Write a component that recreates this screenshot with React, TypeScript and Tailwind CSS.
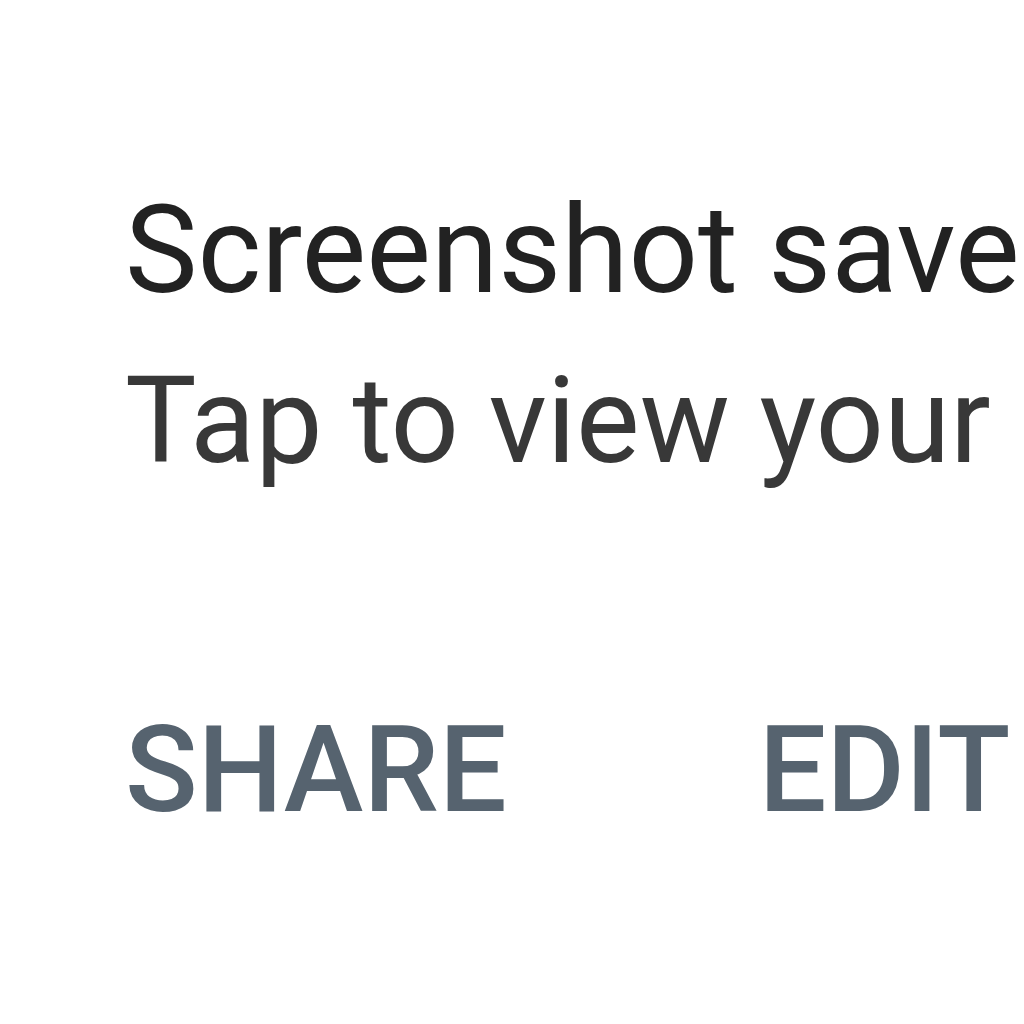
export default function App() {
  return (
    <div
      className="w-[1024px] h-[1024px] overflow-hidden bg-white pl-[125px] pt-[166px]"
      style={{ fontFamily: 'Roboto, "Liberation Sans", sans-serif' }}
    >
      {/* Notification text */}
      <div className="whitespace-nowrap">
        <div className="text-[122px] leading-[170px] font-normal text-[#222222]">Screenshot saved</div>
        <div className="text-[120px] leading-[170px] font-normal text-[#383838]">Tap to view your screenshot</div>
      </div>

      {/* Actions */}
      <div className="mt-[204px] flex items-center gap-[252px] whitespace-nowrap text-[120px] leading-[120px] font-medium text-[#56636f]">
        <span>SHARE</span>
        <span>EDIT</span>
      </div>
    </div>
  );
}
